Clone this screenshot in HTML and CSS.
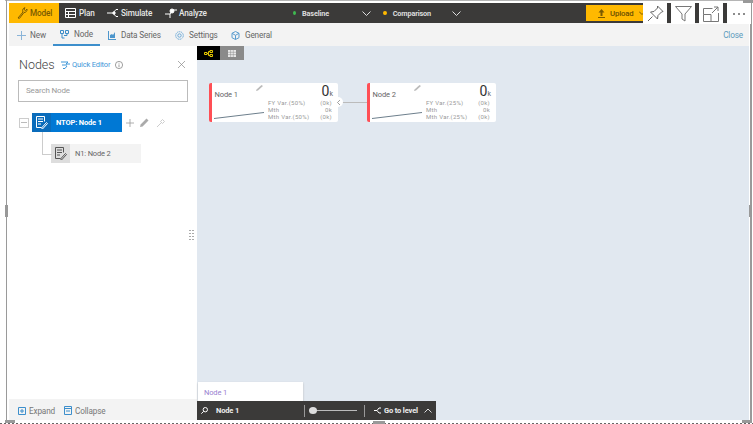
FILE: index.html
```html
<!DOCTYPE html>
<html lang="en">
<head>
    <meta charset="UTF-8">
    <title>Nodes</title>
    <link rel="stylesheet" href="styles.css">
</head>
<body>
    <!-- Frame handles -->
    <div class="edge edge-top"></div>
    <div class="edge edge-left"></div>
    <div class="edge edge-right"></div>
    <div class="edge edge-bottom"></div>
    <div class="handle handle-left"></div>
    <div class="handle handle-right"></div>
    <div class="handle handle-bottom"></div>
    <div class="handle corner-tr"></div>
    <div class="handle corner-bl"></div>
    <div class="handle corner-br"></div>

    <div class="app">
        <!-- Top bar -->
        <header class="topbar">
            <a class="tab tab-active">
                <svg width="11" height="12" viewBox="0 0 11 12" fill="none" stroke="#7a5a00"><path d="M1 11l5-6c-1-2 0-4 2-4.300L7 2.500l1.500 1L10 2c.3 2-1 3.500-3 3.500l-4.500 5.800z"/></svg>
                Model
            </a>
            <a class="tab tab-plan">
                <svg width="11" height="10" viewBox="0 0 11 10" fill="none" stroke="#fff"><path d="M.5.500h10v9H.5zM.5 3.500h10M.5 6.500h10M3.500 3.500v6"/></svg>
                Plan
            </a>
            <a class="tab tab-sim">
                <svg width="12" height="10" viewBox="0 0 12 10" fill="none" stroke="#fff"><path d="M0 5h6M6 5l3-3.500h2M6 5l3 3.500h2"/><circle cx="7" cy="5" r="1.200" fill="#fff"/></svg>
                Simulate
            </a>
            <a class="tab tab-analyze">
                <svg width="12" height="10" viewBox="0 0 12 10" fill="none" stroke="#fff"><path d="M0 6h5l3-4h4M5 6v4"/><circle cx="7" cy="3" r="2" fill="#fff"/></svg>
                Analyze
            </a>
            <span class="scenario scenario-base"><i class="dot dot-green"></i>Baseline</span>
            <svg class="chev chev-base" width="9" height="5" viewBox="0 0 9 5" fill="none" stroke="#ddd"><path d="M.5.500l4 4 4-4"/></svg>
            <span class="scenario scenario-comp"><i class="dot dot-yellow"></i>Comparison</span>
            <svg class="chev chev-comp" width="9" height="5" viewBox="0 0 9 5" fill="none" stroke="#ddd"><path d="M.5.500l4 4 4-4"/></svg>
            <a class="upload">
                <svg width="7" height="9" viewBox="0 0 7 9" fill="#7a5a00"><path d="M3.500 0l3 3.500H4.500V7h-2V3.500H.5zM0 8h7v1H0z"/></svg>
                <span class="upload-label">Upload</span>
                <svg class="upload-chev" width="5" height="4" viewBox="0 0 5 4" fill="none" stroke="#7a5a00"><path d="M0 .5l3 3 3-3"/></svg>
            </a>
            <div class="visual-tools">
                <span class="vtool">
                    <svg width="17" height="17" viewBox="0 0 17 17" fill="none" stroke="#666"><path d="M10.500 1l5.500 5.500-1.500.5-3.500 3.500-.5 3.500-7-7 3.500-.5L10.500 3zM5.500 11.500L1 16"/></svg>
                </span>
                <span class="vtool">
                    <svg width="17" height="16" viewBox="0 0 17 16" fill="none" stroke="#777"><path d="M.5.500h16L10 8v7l-3-2V8z"/></svg>
                </span>
                <span class="vtool">
                    <svg width="16" height="16" viewBox="0 0 16 16" fill="none" stroke="#777"><path d="M.5 8.500V2.500h9M15.500 7v8.500H.5v-7h7.500v7M9 7l6-6M11 1h4v4"/></svg>
                </span>
                <span class="vtool vtool-more"><i></i><i></i><i></i></span>
            </div>
        </header>

        <!-- Toolbar -->
        <nav class="toolbar">
            <a class="tool tool-new">
                <svg width="9" height="9" viewBox="0 0 9 9" stroke="#8ab4d8"><path d="M4.500 0v9M0 4.500h9"/></svg>
                New
            </a>
            <a class="tool tool-node">
                <svg width="9" height="9" viewBox="0 0 9 9" fill="none" stroke="#3a8cc8"><path d="M.5.500h3v3h-3zM5.500.500h3v3h-3zM2 3.500V8h2.500M7 3.500V5.500H4"/></svg>
                Node
            </a>
            <a class="tool tool-series">
                <svg width="8" height="9" viewBox="0 0 8 9" fill="#4d96cc"><path d="M0 0h1v8h7v1H0zM2 4l2-1 1 1 2-3v6H2z"/></svg>
                Data Series
            </a>
            <a class="tool tool-settings">
                <svg width="9" height="9" viewBox="0 0 9 9" fill="none" stroke="#6aa8d8"><circle cx="4.500" cy="4.500" r="3.800" stroke-dasharray="1.500 .6"/><circle cx="4.500" cy="4.500" r="1.700"/></svg>
                Settings
            </a>
            <a class="tool tool-general">
                <svg width="9" height="9" viewBox="0 0 9 9" fill="none" stroke="#5a9ccf"><path d="M4.500.500l3.500 1.800v4.400L4.500 8.500 1 6.700V2.300zM1 2.300l3.500 2 3.500-2M4.500 4.300v4.200"/></svg>
                General
            </a>
            <a class="close-link">Close</a>
        </nav>

        <div class="body-row">
            <!-- Left panel -->
            <aside class="panel">
                <div class="panel-main">
                    <div class="panel-head">
                        <h1>Nodes</h1>
                        <svg class="qe-icon" width="9" height="8" viewBox="0 0 9 8" fill="none" stroke="#3d96d8"><path d="M0 1h7l-2 2h4M1 4h5M6 5l-2 2.500h-2"/></svg>
                        <a class="quick">Quick Editor</a>
                        <svg class="info" width="8" height="8" viewBox="0 0 8 8" fill="none" stroke="#777" stroke-width=".7"><circle cx="4" cy="4" r="3.600"/><path d="M4 3.400v2.800M4 1.800v.8"/></svg>
                        <svg class="panel-x" width="7" height="7" viewBox="0 0 7 7" stroke="#888" stroke-width=".7"><path d="M0 0l7 7M7 0L0 7"/></svg>
                    </div>
                    <div class="search">Search Node</div>
                    <div class="tree">
                        <div class="tree-top">
                            <span class="minus"></span>
                            <div class="tree-node tree-node-on">
                                <span class="tree-icon">
                                    <svg width="13" height="13" viewBox="0 0 13 13" fill="none" stroke="#fff"><path d="M9.500 5.500V.5h-8v11h5M3 3h5M3 5.500h5M3 8h3M6.500 12l5-5.500 1 1-5 5.500z"/></svg>
                                </span>
                                <span class="tree-label">NTOP: Node 1</span>
                            </div>
                            <svg class="act act-plus" width="8" height="8" viewBox="0 0 8 8" stroke="#999" stroke-width=".8"><path d="M4 0v8M0 4h8"/></svg>
                            <svg class="act act-pen" width="9" height="9" viewBox="0 0 9 9" fill="#aaa"><path d="M0 9l.6-2.600L6.500.5l2 2-5.900 5.900z"/></svg>
                            <svg class="act act-key" width="8" height="8" viewBox="0 0 8 8" fill="none" stroke="#ccc"><path d="M0 8l4.500-4.500M3.500 2.500l2-2 2 2-2 2z"/></svg>
                        </div>
                        <div class="tree-child">
                            <div class="tree-node tree-node-sub">
                                <span class="tree-icon">
                                    <svg width="13" height="13" viewBox="0 0 13 13" fill="none" stroke="#555"><path d="M9.500 5.500V.5h-8v11h5M3 3h5M3 5.500h5M3 8h3M6.500 12l5-5.500 1 1-5 5.500z"/></svg>
                                </span>
                                <span class="tree-label">N1: Node 2</span>
                            </div>
                        </div>
                    </div>
                    <div class="grip"></div>
                </div>
                <footer class="panel-foot">
                    <svg width="8" height="8" viewBox="0 0 8 8" fill="none" stroke="#3d8fcc"><path d="M.5.500h7v7h-7zM4 2v4M2 4h4"/></svg>
                    <span class="foot-label foot-expand">Expand</span>
                    <svg width="8" height="9" viewBox="0 0 8 9" fill="none" stroke="#3d8fcc"><path d="M.5.500h7v8h-7zM.5 2.500h7M2 5h4"/></svg>
                    <span class="foot-label">Collapse</span>
                </footer>
            </aside>

            <!-- Canvas -->
            <main class="canvas">
                <div class="view-tabs">
                    <span class="view view-on">
                        <svg width="9" height="7" viewBox="0 0 9 7" fill="none" stroke="#e8c800"><path d="M.5 2.500h2.500v2H.5zM6 .5h2.500v2H6zM6 4.500h2.500v2H6zM3 3.500h1.500V1.500H6M4.500 3.500v2H6"/></svg>
                    </span>
                    <span class="view view-off">
                        <svg width="8" height="7" viewBox="0 0 8 7" fill="#e8e8e8"><path d="M0 0h8v7H0z"/><path d="M0 2.300h8M0 4.600h8M2.600 0v7M5.300 0v7" stroke="#8a8a8a" stroke-width=".5"/></svg>
                    </span>
                </div>

                <span class="link-line"></span>

                <div class="card card-one">
                    <span class="card-title">Node 1</span>
                    <svg class="card-pen" width="7" height="6" viewBox="0 0 7 6" fill="#bbb"><path d="M0 6l.5-1.500L5.500 0 7 1 2 5.500z"/></svg>
                    <span class="card-value">0<small>k</small></span>
                    <div class="card-rows">
                        <div class="card-row"><span>FY Var.(50%)</span><span>(0k)</span></div>
                        <div class="card-row"><span>Mth</span><span>0k</span></div>
                        <div class="card-row"><span>Mth Var.(50%)</span><span>(0k)</span></div>
                    </div>
                    <svg class="spark" width="50" height="7" viewBox="0 0 50 7"><path d="M0 6.500L50 .5" stroke="#6d7f8c"/></svg>
                    <span class="collapse-dot">
                        <svg width="3" height="5" viewBox="0 0 3 5" fill="none" stroke="#777" stroke-width=".7"><path d="M3 0L.5 2.500 3 5"/></svg>
                    </span>
                </div>

                <div class="card card-two">
                    <span class="card-title">Node 2</span>
                    <svg class="card-pen" width="7" height="6" viewBox="0 0 7 6" fill="#bbb"><path d="M0 6l.5-1.500L5.500 0 7 1 2 5.500z"/></svg>
                    <span class="card-value">0<small>k</small></span>
                    <div class="card-rows">
                        <div class="card-row"><span>FY Var.(25%)</span><span>(0k)</span></div>
                        <div class="card-row"><span>Mth</span><span>0k</span></div>
                        <div class="card-row"><span>Mth Var.(25%)</span><span>(0k)</span></div>
                    </div>
                    <svg class="spark" width="50" height="7" viewBox="0 0 50 7"><path d="M0 6.500L50 .5" stroke="#6d7f8c"/></svg>
                </div>

                <div class="bottom-dock">
                    <div class="crumb">Node 1</div>
                    <div class="level-bar">
                        <svg class="lv-search" width="7" height="7" viewBox="0 0 7 7" fill="none" stroke="#fff"><circle cx="4.300" cy="2.700" r="2.200"/><path d="M2.700 4.300L.3 6.700"/></svg>
                        <span class="lv-name">Node 1</span>
                        <span class="lv-sep"></span>
                        <span class="slider"><i></i></span>
                        <span class="lv-sep lv-sep2"></span>
                        <svg class="lv-icon" width="7" height="7" viewBox="0 0 7 7" fill="none" stroke="#fff"><path d="M0 3.500h3M3 3.500L5 1h2M3 3.500L5 6h2"/></svg>
                        <span class="lv-go">Go to level</span>
                        <svg class="lv-chev" width="8" height="5" viewBox="0 0 8 5" fill="none" stroke="#ddd"><path d="M.5 4.500L4 1l3.500 3.500"/></svg>
                    </div>
                </div>
            </main>
        </div>
    </div>
</body>
</html>
```

FILE: styles.css
```css
* { margin: 0; padding: 0; box-sizing: border-box; }
html, body { height: 100%; overflow: hidden; }
body { background: #fff; font-family: Roboto, "Open Sans", sans-serif; font-size: 8px; letter-spacing: -.15px; color: #555; position: relative; white-space: nowrap; }
a { display: flex; align-items: center; }
svg { display: block; flex: none; }

/* frame */
.edge { position: absolute; background: #9a9a9a; }
.edge-top { left: 5px; right: 10px; top: 0; height: 1px; background: #b5b5b5; }
.edge-left { left: 6px; top: 0; bottom: 3px; width: 1px; }
.edge-right { right: 1px; top: 0; bottom: 3px; width: 2px; }
.edge-bottom { left: 0; right: 0; bottom: 0; height: 1px; background: repeating-linear-gradient(90deg, #666 0 2px, #fff 2px 4px); }
.handle { position: absolute; background: #999; }
.handle-left { left: 5px; top: 205px; width: 3px; height: 12px; }
.handle-right { right: 1px; top: 205px; width: 3px; height: 12px; }
.handle-bottom { left: 373px; bottom: 0; width: 12px; height: 3px; }
.corner-tr { right: 0; top: 0; width: 10px; height: 3px; }
.corner-bl { left: 5px; bottom: 1px; width: 10px; height: 3px; }
.corner-br { right: 1px; bottom: 1px; width: 10px; height: 3px; }

.app { position: absolute; left: 9px; top: 3px; width: 740px; height: 417px; display: flex; flex-direction: column; }

/* top bar */
.topbar { height: 20px; background: #3b3a39; display: flex; align-items: center; position: relative; color: #fff; font-weight: 500; font-size: 8.200px; flex: none; }
.tab { height: 20px; gap: 2px; color: #e6e6e6; flex: none; }
.tab-active { width: 50px; background: #ffb900; color: #7a5a00; padding-left: 8px; }
.tab-plan { margin-left: 6px; gap: 3px; width: 29px; }
.tab-sim { margin-left: 13px; width: 45px; }
.tab-analyze { margin-left: 13px; width: 42px; }
.scenario { display: flex; align-items: center; color: #ddd; font-size: 7.300px; font-weight: 700; flex: none; }
.scenario-base { margin-left: 86px; width: 36px; }
.scenario-comp { margin-left: 12px; width: 48px; }
.dot { width: 4px; height: 4px; border-radius: 50%; margin-right: 6px; }
.dot-green { background: #3fb950; }
.dot-yellow { background: #ffb900; }
.chev-base { margin-left: 33px; }
.chev-comp { margin-left: 21px; }
.upload { position: absolute; left: 577px; top: 2px; width: 57px; height: 16px; background: #ffb900; color: #6b5000; padding-left: 12px; gap: 5px; overflow: hidden; }
.upload-label { font-size: 7.800px; width: 23px; }
.upload-chev { margin-left: 1px; }
.visual-tools { position: absolute; left: 634px; top: 0; height: 21px; display: flex; gap: 4px; }
.vtool { width: 24px; height: 21px; background: #fff; display: flex; align-items: center; justify-content: center; }
.vtool-more { gap: 3px; }
.vtool-more i { width: 2px; height: 2px; background: #666; border-radius: 50%; }

/* toolbar */
.toolbar { height: 23px; background: #f3f3f3; display: flex; align-items: center; flex: none; color: #666; font-size: 8.200px; }
.tool { height: 23px; gap: 5px; color: #666; flex: none; padding-top: 1px; }
.tool-new { margin-left: 8px; gap: 4px; width: 28px; }
.tool-node { margin-left: 8px; padding: 1px 7px 0; width: 47px; border-bottom: 2px solid #3d8fcc; }
.tool-series { margin-left: 8px; width: 51px; }
.tool-settings { margin-left: 16px; width: 41px; }
.tool-general { margin-left: 15px; width: 39px; }
.close-link { margin-left: auto; margin-right: 6px; color: #5b9bbd; padding-top: 1px; }

.body-row { flex: 1; display: flex; min-height: 0; }

/* left panel */
.panel { width: 188px; display: flex; flex-direction: column; background: #fff; flex: none; }
.panel-main { flex: 1; padding: 11px 9px 0; position: relative; }
.panel-head { display: flex; align-items: center; height: 15px; }
.panel-head h1 { font-size: 12.500px; font-weight: 300; letter-spacing: 0; color: #444; line-height: 15px; margin-left: 1px; width: 34px; flex: none; }
.qe-icon { margin-left: 8px; }
.quick { margin-left: 2px; color: #3d96d8; font-size: 7.500px; width: 38px; flex: none; }
.info { margin-left: 5px; }
.panel-x { margin-left: auto; margin-right: 3px; }
.search { margin-top: 8px; height: 22px; border: 1px solid #bbb; padding-left: 7px; line-height: 20px; color: #999; }
.tree { margin-top: 11px; position: relative; }
.tree-top { display: flex; align-items: center; padding-left: 1px; }
.minus { width: 10px; height: 10px; border: 1px solid #ccc; position: relative; margin-right: 3px; }
.minus::after { content: ""; position: absolute; left: 1px; right: 1px; top: 3px; height: 1px; background: #bbb; }
.tree-node { width: 90px; height: 19px; display: flex; align-items: center; }
.tree-node-on { background: #0078d4; color: #fff; font-weight: 700; }
.tree-node-sub { background: #f3f3f3; color: #666; }
.tree-icon { width: 19px; height: 19px; display: flex; align-items: center; justify-content: center; flex: none; }
.tree-node-on .tree-icon { background: #0a6cbb; }
.tree-node-sub .tree-icon { background: #ddd; }
.tree-label { margin-left: 5px; font-size: 7.500px; }
.act-plus { margin-left: 4px; }
.act-pen { margin-left: 6px; }
.act-key { margin-left: 8px; }
.tree-child { margin: 12px 0 0 33px; position: relative; }
.tree-child::before { content: ""; position: absolute; left: -9px; top: -12px; width: 9px; height: 22px; border-left: 1px solid #ccc; border-bottom: 1px solid #ccc; }
.grip { position: absolute; right: 3px; top: 184px; width: 5px; height: 10px; background: repeating-linear-gradient(0deg, #aaa 0 1px, transparent 1px 3px); }
.grip::after { content: ""; position: absolute; left: 2px; top: 0; width: 1px; height: 10px; background: #fff; }
.panel-foot { height: 21px; background: #f3f3f3; display: flex; align-items: center; padding: 2px 0 0 9px; color: #777; font-size: 8.200px; flex: none; }
.foot-label { margin-left: 3px; }
.foot-expand { margin-right: 9px; width: 26px; }

/* canvas */
.canvas { flex: 1; background: #e1e8f0; position: relative; min-width: 0; }
.view-tabs { display: flex; height: 14px; }
.view { display: flex; align-items: center; justify-content: center; height: 14px; }
.view-on { width: 23px; background: #000; }
.view-off { width: 24px; background: #8a8a8a; }

.card { position: absolute; top: 37px; width: 129px; height: 39px; background: #fff; border-left: 3px solid #ff4f55; border-radius: 2px; font-size: 6px; letter-spacing: .3px; color: #999; }
.card-one { left: 12px; }
.card-two { left: 170px; }
.card-title { position: absolute; left: 2.500px; top: 7px; font-size: 7.500px; letter-spacing: -.1px; color: #666; }
.card-pen { position: absolute; left: 44px; top: 2px; }
.card-value { position: absolute; right: 5px; top: 1px; font-size: 14px; letter-spacing: 0; color: #333; line-height: 14px; }
.card-value small { font-size: 7px; color: #666; }
.card-rows { position: absolute; left: 56px; right: 6px; top: 16px; }
.card-row { display: flex; justify-content: space-between; height: 7px; line-height: 7px; }
.spark { position: absolute; left: 2px; top: 29px; }
.collapse-dot { position: absolute; left: 121px; top: 14px; width: 10px; height: 10px; background: #fff; border-radius: 50%; display: flex; align-items: center; justify-content: center; }
.link-line { position: absolute; left: 145px; top: 56px; width: 25px; height: 1px; background: #bbb; }

.bottom-dock { position: absolute; left: 0; bottom: 0; width: 239px; }
.crumb { width: 105px; height: 19px; margin-left: 1px; background: #fff; box-shadow: 0 1px 2px #bbb; padding-left: 6px; line-height: 21px; color: #9a7fd0; font-size: 7.500px; }
.level-bar { height: 19px; background: #3b3a39; display: flex; align-items: center; color: #eee; font-weight: 700; font-size: 7.500px; }
.lv-search { margin-left: 4px; flex: none; }
.lv-name { margin-left: 8px; width: 88px; flex: none; }
.lv-sep { width: 1px; height: 12px; background: #999; flex: none; }
.slider { position: relative; width: 48px; height: 1px; background: #bbb; margin-left: 4px; flex: none; }
.slider i { position: absolute; left: 0; top: -3px; width: 8px; height: 7px; border-radius: 50%; background: #ddd; }
.lv-sep2 { margin-left: 7px; }
.lv-icon { margin-left: 9px; }
.lv-go { margin-left: 3px; width: 34px; flex: none; }
.lv-chev { margin-left: 6px; }
```
